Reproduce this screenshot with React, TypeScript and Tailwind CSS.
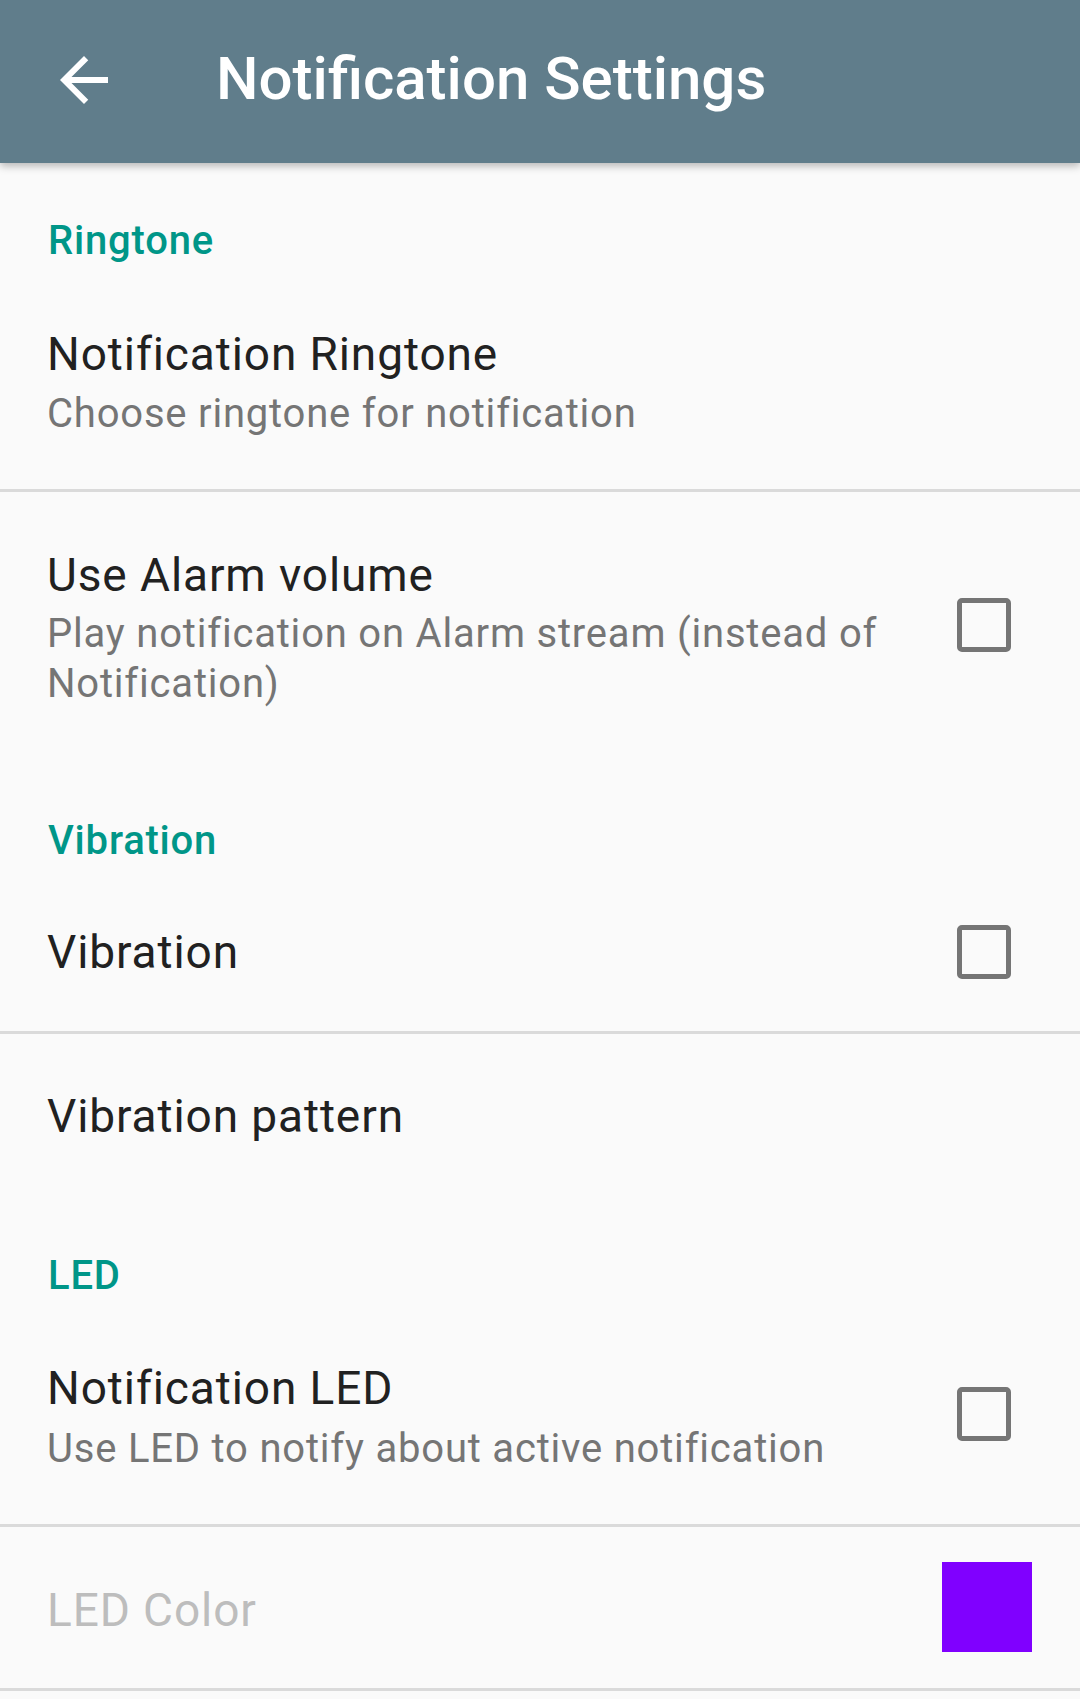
import React from 'react';

const Category: React.FC<{ label: string; className?: string }> = ({ label, className = '' }) => (
  <div className={`pl-[48px] ${className}`}>
    <div className="text-[40px] leading-[48px] font-medium tracking-[0.8px] text-[#009688]">{label}</div>
  </div>
);

const Checkbox: React.FC<{ className?: string }> = ({ className = '' }) => (
  <div className={`w-[54px] h-[54px] shrink-0 rounded-[5px] border-[5px] border-[#757575] mr-[69px] ${className}`} />
);

const Pref: React.FC<{
  title: string;
  summary?: string;
  disabled?: boolean;
  widget?: React.ReactNode;
  className?: string;
  textClass?: string;
  summaryGap?: string;
}> = ({ title, summary, disabled, widget, className = '', textClass = '', summaryGap = 'mt-[7px]' }) => (
  <div className={`flex items-center pl-[47px] ${className}`}>
    <div className={`flex-1 pr-[40px] ${textClass}`}>
      <div className={`text-[46px] leading-[56px] tracking-[0.9px] ${disabled ? 'text-[#bdbdbd]' : 'text-[#212121]'}`}>
        {title}
      </div>
      {summary && (
        <div className={`${summaryGap} text-[40px] leading-[50px] tracking-[0.8px] text-[#757575]`}>{summary}</div>
      )}
    </div>
    {widget}
  </div>
);

const Divider = () => <div className="h-[3px] bg-[#dadada]" />;

export default function App() {
  return (
    <div className="w-[1080px] min-h-[1699px] bg-[#fafafa] font-[Roboto,sans-serif]">
      <header className="relative z-10 h-[163px] bg-[#607d8b] flex items-center shadow-[0_3px_8px_rgba(0,0,0,0.28)]">
        <svg width="72" height="72" viewBox="0 0 24 24" className="ml-[48px] mt-[-4px] shrink-0" fill="#ffffff">
          <path d="M20 11H7.83l5.59-5.59L12 4l-8 8 8 8 1.41-1.41L7.83 13H20v-2z" />
        </svg>
        <h1 className="ml-[96px] text-[60px] leading-none font-medium text-white mt-[-6px]">Notification Settings</h1>
      </header>

      <Category label="Ringtone" className="pt-[54px]" />
      <Pref
        title="Notification Ringtone"
        summary="Choose ringtone for notification"
        className="pt-[61px] pb-[50px]"
      />
      <Divider />
      <Pref
        title="Use Alarm volume"
        summary="Play notification on Alarm stream (instead of Notification)"
        summaryGap="mt-[6px]"
        className="pt-[55px] pb-[50px]"
        widget={<Checkbox className="mb-[6px]" />}
      />

      <Category label="Vibration" className="pt-[58px]" />
      <Pref title="Vibration" className="pt-[59px] pb-[51px]" widget={<Checkbox />} />
      <Divider />
      <Pref title="Vibration pattern" className="pt-[54px] pb-[50px]" />

      <Category label="LED" className="pt-[58px]" />
      <Pref
        title="Notification LED"
        summary="Use LED to notify about active notification"
        summaryGap="mt-[8px]"
        className="pt-[60px] pb-[50px]"
        widget={<Checkbox className="mb-[6px]" />}
      />
      <Divider />
      <Pref
        title="LED Color"
        disabled
        className="pt-[35px] pb-[36px]"
        textClass="pt-[6px]"
        widget={<div className="w-[90px] h-[90px] shrink-0 bg-[#8000ff] mr-[48px]" />}
      />
      <Divider />
    </div>
  );
}
